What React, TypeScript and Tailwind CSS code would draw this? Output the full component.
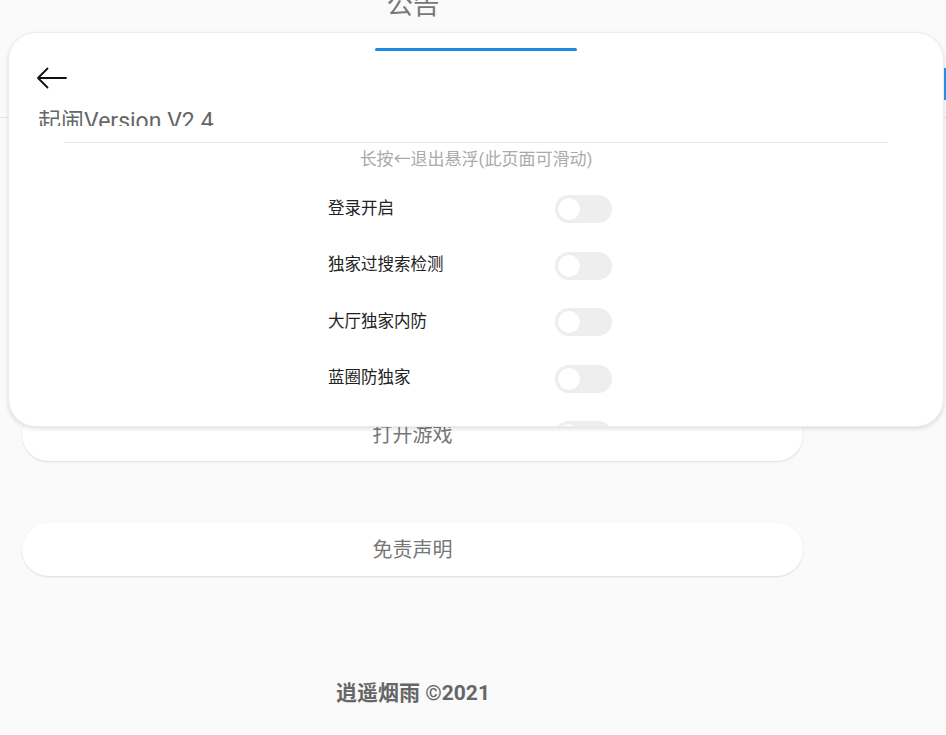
import React from "react";

const options = ["登录开启", "独家过搜索检测", "大厅独家内防", "蓝圈防独家"];

function Toggle() {
  return (
    <div className="flex h-[28px] w-[57px] items-center rounded-full bg-[#eeeeee] px-[3px]">
      <div className="h-[22px] w-[22px] rounded-full bg-white shadow-[0_0_1px_rgba(0,0,0,0.08)]" />
    </div>
  );
}

function BackArrow() {
  return (
    <svg width="31" height="22" viewBox="0 0 31 22" fill="none">
      <path
        d="M30 11H2M11.5 1.5L2 11l9.5 9.5"
        stroke="#111"
        strokeWidth="1.8"
        strokeLinecap="round"
        strokeLinejoin="round"
      />
    </svg>
  );
}

export default function App() {
  return (
    <div
      className="relative h-[735px] w-[946px] overflow-hidden bg-[#fafafa]"
      style={{ fontFamily: "Roboto, 'Noto Sans CJK SC', sans-serif" }}
    >
      {/* page behind the floating window */}
      <div className="flex flex-col">
        <div className="flex w-[826px] justify-center">
          <p className="mt-[-10px] text-[26.5px] leading-[30px] text-[#777]">公告</p>
        </div>

        <div className="flex h-[98px] justify-end border-b border-[#e6e6e6]">
          <div className="mt-[48px] h-[32px] w-[2px] bg-[#2196f3]" />
        </div>

        <div className="ml-[22px] mt-[290px] flex w-[781px] flex-col gap-[62px]">
          <div className="flex h-[53px] items-center justify-center rounded-full bg-white shadow-[0_1px_2px_rgba(0,0,0,0.12)]">
            <span className="text-[20px] text-[#777]">打开游戏</span>
          </div>
          <div className="flex h-[53px] items-center justify-center rounded-full bg-white shadow-[0_1px_2px_rgba(0,0,0,0.12)]">
            <span className="text-[20px] text-[#777]">免责声明</span>
          </div>
        </div>

        <div className="mt-[102px] flex w-[826px] justify-center">
          <p className="text-[21px] font-bold leading-[30px] text-[#666]">逍遥烟雨 ©2021</p>
        </div>
      </div>

      {/* floating window */}
      <div className="absolute left-[8px] top-[32px] flex h-[395px] w-[936px] flex-col overflow-hidden rounded-[28px] border border-[#ececec] bg-white shadow-[0_2px_4px_rgba(0,0,0,0.12)]">
        <div className="mx-auto mt-[15px] h-[3px] w-[202px] rounded-full bg-[#1e88e5]" />

        <div className="ml-[27px] mt-[16px]">
          <BackArrow />
        </div>

        <div className="ml-[29px] mt-[19px] h-[20px] overflow-hidden">
          <p className="text-[23px] leading-[28px] text-[#666]">起闹Version V2.4</p>
        </div>

        <div className="mx-[55px] mt-[16px] h-px bg-[#e8e8e8]" />

        <div className="flex flex-col overflow-hidden">
          <p className="mt-[5px] text-center text-[17px] leading-[22px] text-[#aaa]">
            长按←退出悬浮(此页面可滑动)
          </p>
          <div className="mt-[25px] flex flex-col gap-[28.5px] pl-[319px]">
            {options.map((label) => (
              <div key={label} className="flex h-[28px] items-center">
                <span className="w-[227px] text-[16.5px] text-[#222]">{label}</span>
                <Toggle />
              </div>
            ))}
            <div className="flex h-[28px] items-center">
              <span className="w-[227px]" />
              <Toggle />
            </div>
          </div>
        </div>
      </div>
    </div>
  );
}
